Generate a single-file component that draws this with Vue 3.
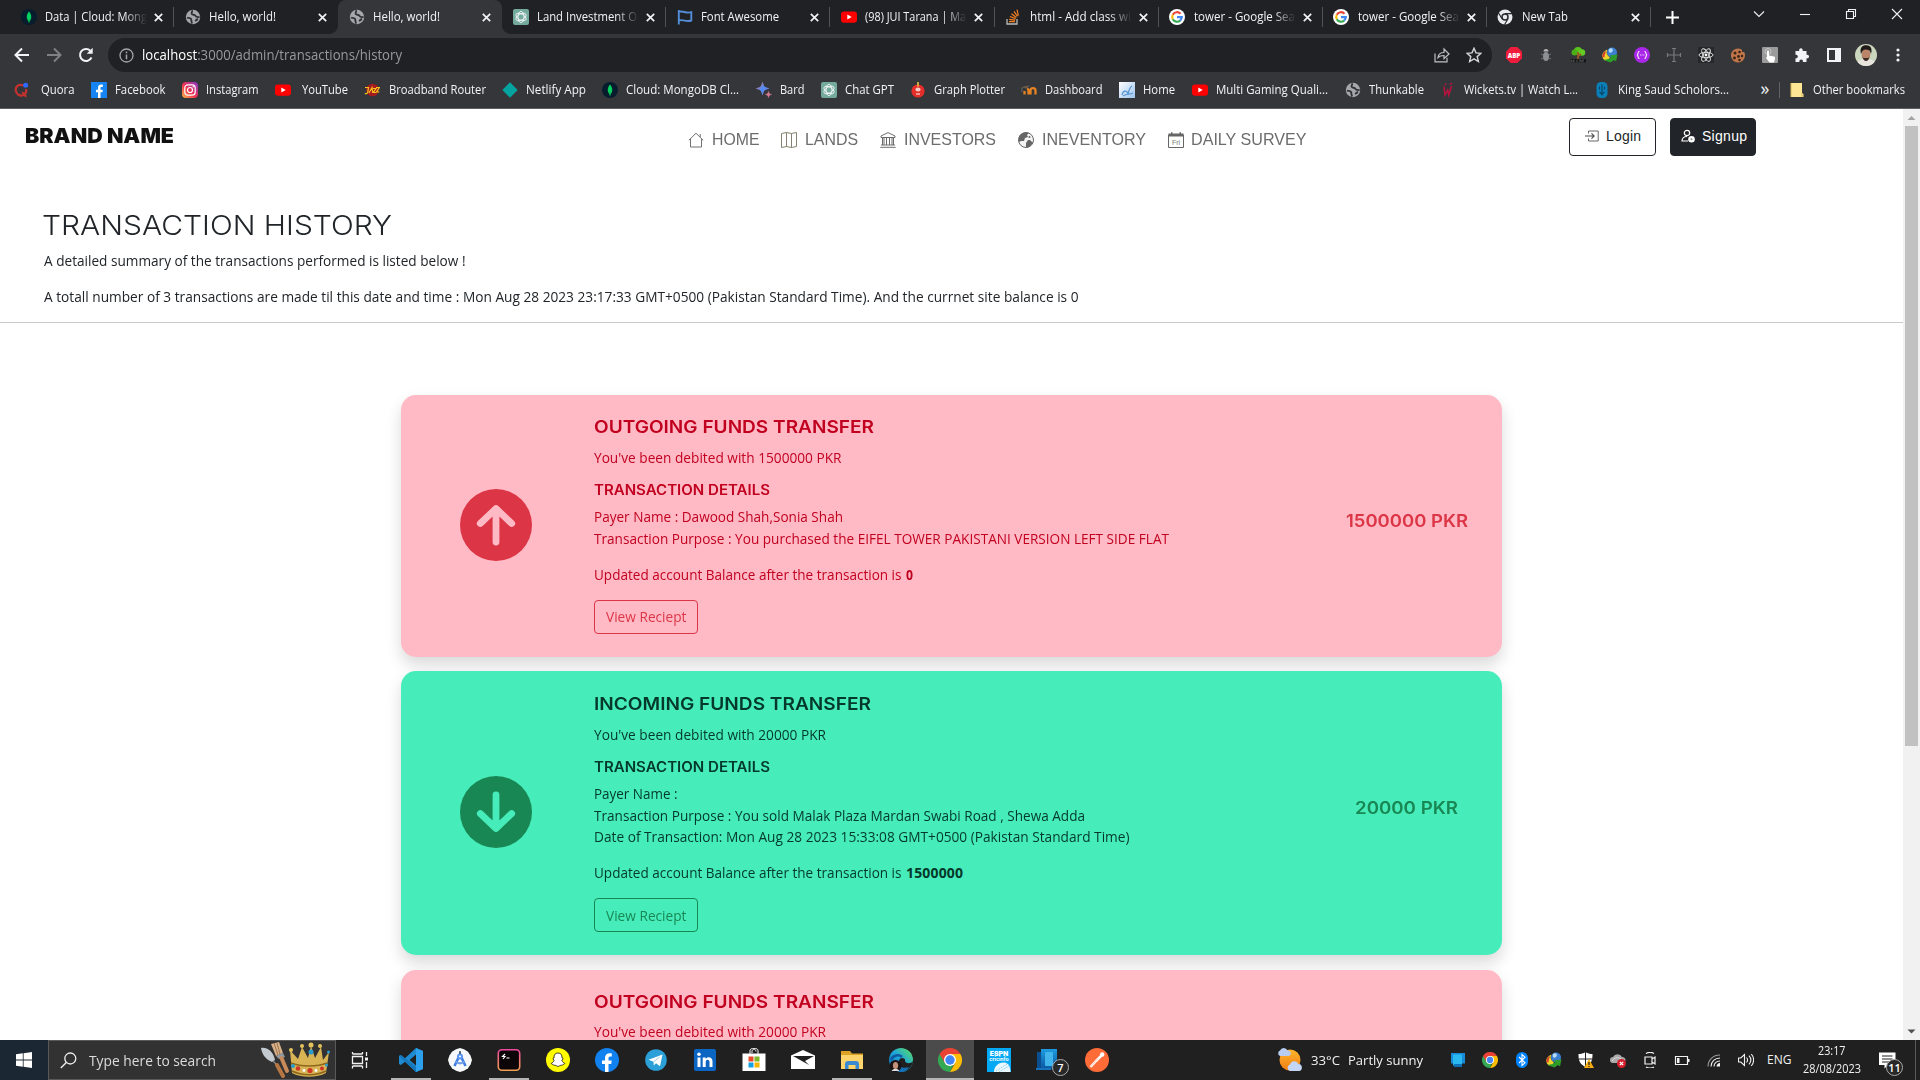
<script setup>
const tabs = [
  { icon: 'mongo', text: 'Data | Cloud: Mong', w: 102, fade: true },
  { icon: 'globe', text: 'Hello, world!', w: 67 },
  { icon: 'globe', text: 'Hello, world!', w: 67, active: true },
  { icon: 'gpt', text: 'Land Investment O', w: 100, fade: true },
  { icon: 'flag', text: 'Font Awesome', w: 78 },
  { icon: 'youtube', text: '(98) JUI Tarana | Ma', w: 101, fade: true },
  { icon: 'stack', text: 'html - Add class wi', w: 101, fade: true },
  { icon: 'google', text: 'tower - Google Sea', w: 101, fade: true },
  { icon: 'google', text: 'tower - Google Sea', w: 101, fade: true },
  { icon: 'chromebw', text: 'New Tab', w: 46 },
]

const bookmarks = [
  { icon: 'quora', text: 'Quora', x: 14, tx: 41, w: 33.5 },
  { icon: 'fbsquare', text: 'Facebook', x: 91, tx: 115, w: 50.5 },
  { icon: 'instagram', text: 'Instagram', x: 182, tx: 206, w: 52.5 },
  { icon: 'youtube', text: 'YouTube', x: 275, tx: 302, w: 46 },
  { icon: 'jazz', text: 'Broadband Router', x: 364, tx: 389, w: 97 },
  { icon: 'netlify', text: 'Netlify App', x: 502, tx: 526, w: 60 },
  { icon: 'mongo', text: 'Cloud: MongoDB Cl...', x: 602, tx: 626, w: 113 },
  { icon: 'bard', text: 'Bard', x: 756, tx: 780, w: 24.5 },
  { icon: 'gpt', text: 'Chat GPT', x: 821, tx: 845, w: 49 },
  { icon: 'plotter', text: 'Graph Plotter', x: 910, tx: 934, w: 71 },
  { icon: 'moodle', text: 'Dashboard', x: 1021, tx: 1045, w: 57.5 },
  { icon: 'homepic', text: 'Home', x: 1119, tx: 1143, w: 32 },
  { icon: 'youtube', text: 'Multi Gaming Quali...', x: 1192, tx: 1216, w: 112 },
  { icon: 'globe', text: 'Thunkable', x: 1345, tx: 1369, w: 55 },
  { icon: 'wickets', text: 'Wickets.tv | Watch L...', x: 1440, tx: 1464, w: 114 },
  { icon: 'ksu', text: 'King Saud Scholors...', x: 1594, tx: 1618, w: 111 },
].map((b, i, all) => ({ ...b, width: (all[i + 1]?.x ?? 1758.5) - b.x, gap: b.tx - b.x - 16 }))

const extensions = ['abp', 'bug', 'tree', 'idm', 'braces', 'cross', 'react', 'cookie', 'hand', 'puzzle', 'panel', 'avatar', 'dots']

const nav = [
  { icon: 'house', text: 'HOME', w: 47.5, width: 93 },
  { icon: 'map', text: 'LANDS', w: 53, width: 99 },
  { icon: 'bank', text: 'INVESTORS', w: 92, width: 138 },
  { icon: 'earth', text: 'INEVENTORY', w: 104, width: 149.5 },
  { icon: 'calendar', text: 'DAILY SURVEY', w: 115.5, width: 141 },
]

const transactions = [
  {
    kind: 'out', title: 'OUTGOING FUNDS TRANSFER', titleW: 280,
    note: "You've been debited with 1500000 PKR", noteW: 247.5,
    lines: [
      { text: 'Payer Name : Dawood Shah,Sonia Shah', w: 249 },
      { text: 'Transaction Purpose : You purchased the EIFEL TOWER PAKISTANI VERSION LEFT SIDE FLAT', w: 575 },
    ],
    balance: '0', balanceW: 7, amount: '1500000 PKR', amountW: 122,
  },
  {
    kind: 'in', title: 'INCOMING FUNDS TRANSFER', titleW: 277,
    note: "You've been debited with 20000 PKR", noteW: 232,
    lines: [
      { text: 'Payer Name :', w: 83.5 },
      { text: 'Transaction Purpose : You sold Malak Plaza Mardan Swabi Road , Shewa Adda', w: 491 },
      { text: 'Date of Transaction: Mon Aug 28 2023 15:33:08 GMT+0500 (Pakistan Standard Time)', w: 535.5 },
    ],
    balance: '1500000', balanceW: 57, amount: '20000 PKR', amountW: 103,
  },
  {
    kind: 'out', title: 'OUTGOING FUNDS TRANSFER', titleW: 280,
    note: "You've been debited with 20000 PKR", noteW: 232,
    lines: [], balance: '', balanceW: 0, amount: '20000 PKR', amountW: 103,
  },
]

const apps = [
  { icon: 'vscode', open: true }, { icon: 'studio' }, { icon: 'terminal', open: true }, { icon: 'snapchat' },
  { icon: 'facebook' }, { icon: 'telegram' }, { icon: 'linkedin' }, { icon: 'store' }, { icon: 'mail' },
  { icon: 'explorer', open: true }, { icon: 'edge' }, { icon: 'chrome', active: true }, { icon: 'espn' },
  { icon: 'phone', badge: '7' }, { icon: 'postman' },
]
const tray = ['pc', 'chrome', 'bluetooth', 'idm', 'shield', 'cloudx', 'meet', 'battery', 'wifi', 'volume']

// Sets a line of text to a given width: tracking when it is short, condensing when it is long.
// With .stretch the glyphs themselves are widened instead of tracked.
const vFit = {
  mounted(el, { value, modifiers }) {
    if (!value) return
    el.classList.add('fit')
    const natural = el.getBoundingClientRect().width
    const n = el.textContent.length
    if (value >= natural && n > 1 && !modifiers.stretch) {
      el.style.letterSpacing = `${(value - natural) / (n - 1)}px`
    } else {
      el.style.transform = `scaleX(${value / natural})`
      el.style.marginRight = `${value - natural}px`
    }
  },
}
</script>

<template>
  <div class="screen">
    <svg class="defs" aria-hidden="true">
      <defs>
        <linearGradient id="g-insta" x1="0" y1="1" x2="1" y2="0"><stop offset="0" stop-color="#fdc04a" /><stop offset=".45" stop-color="#f0304f" /><stop offset="1" stop-color="#8a3ad0" /></linearGradient>
        <linearGradient id="g-edge" x1="0" y1="1" x2="1" y2="0"><stop offset="0" stop-color="#0c59a4" /><stop offset=".5" stop-color="#1da5dc" /><stop offset="1" stop-color="#5ee05c" /></linearGradient>
        <linearGradient id="g-bard" x1="0" y1="0" x2="1" y2="1"><stop offset="0" stop-color="#e06a6a" /><stop offset=".5" stop-color="#4d8df5" /><stop offset="1" stop-color="#8c7bd8" /></linearGradient>
        <linearGradient id="g-sun" x1="0" y1="0" x2="0" y2="1"><stop offset="0" stop-color="#ffb629" /><stop offset="1" stop-color="#f27d16" /></linearGradient>
        <linearGradient id="g-term" x1="0" y1="0" x2="0" y2="1"><stop offset="0" stop-color="#f04aa0" /><stop offset="1" stop-color="#f0a050" /></linearGradient>
        <linearGradient id="g-phone" x1="0" y1="0" x2="0" y2="1"><stop offset="0" stop-color="#1e9be0" /><stop offset="1" stop-color="#0b5aa2" /></linearGradient>
        <linearGradient id="g-pic" x1="0" y1="0" x2="1" y2="1"><stop offset="0" stop-color="#ffffff" /><stop offset="1" stop-color="#9cc3ee" /></linearGradient>
      </defs>
      <symbol id="i-mongo" viewBox="0 0 16 16"><circle cx="8" cy="8" r="8" fill="#071c2c" /><path d="M8 2.500c3 3.500 3 7 0 10.500c-3-3.500-3-7 0-10.500z" fill="#06d05e" /><path d="M8 10v4" stroke="#0aa34f" stroke-width=".8" /></symbol>
      <symbol id="i-globe" viewBox="0 0 16 16"><circle cx="8" cy="8" r="7.200" fill="#a4a8ad" /><path d="M2 8.500c1 .5 3 .3 4 1.300c.8 1-.2 1.800.6 2.900c.5.800.2 1.500-.4 1.700M6.500 1.500c2 1-1 2 .3 3.500c1 1.200 3.200.2 3.800 2c.5 1.500 2.500 1 4 1.300M10 12c1-.5 1.500-1.500 3-2" fill="none" stroke="#303236" stroke-width="1.900" /></symbol>
      <symbol id="i-gpt" viewBox="0 0 16 16"><rect width="16" height="16" rx="2" fill="#74aa9c" /><g fill="none" stroke="#fff" stroke-width=".8"><ellipse cx="8" cy="8" rx="3" ry="5.600" /><ellipse cx="8" cy="8" rx="3" ry="5.600" transform="rotate(60 8 8)" /><ellipse cx="8" cy="8" rx="3" ry="5.600" transform="rotate(120 8 8)" /></g></symbol>
      <symbol id="i-flag" viewBox="0 0 16 16"><path d="M1.800 1v14.500M1.800 3c4-2 7 2 12.500.2v8.300c-5.500 2-8-1.800-12.500.2" fill="none" stroke="#538dd7" stroke-width="1.900" /></symbol>
      <symbol id="i-youtube" viewBox="0 0 16 16"><rect y="2.400" width="16" height="11.400" rx="3" fill="#f00" /><path d="M6.300 5.600v5l4.400-2.500z" fill="#fff" /></symbol>
      <symbol id="i-stack" viewBox="0 0 16 16"><path d="M2 10v5h10v-5" fill="none" stroke="#bcbbbb" stroke-width="1.300" /><path d="M4 12.700h6M4.200 10.300l6 .8M4.900 7.500l5.700 2.100M6.500 4.700l4.900 3.700M9 2.300l3.500 5M12 .7l1.400 6" stroke="#f48024" stroke-width="1.200" /></symbol>
      <symbol id="i-google" viewBox="0 0 16 16"><circle cx="8" cy="8" r="8" fill="#fff" /><g fill="none" stroke-width="2.200"><path d="M11.500 4.700A4.800 4.800 0 0 0 3.800 5.700" stroke="#ea4335" /><path d="M3.800 5.700a4.800 4.800 0 0 0 0 4.600" stroke="#fbbc05" /><path d="M3.800 10.300a4.800 4.800 0 0 0 7.300 1.300" stroke="#34a853" /><path d="M11.100 11.600a4.600 4.600 0 0 0 1.700-3.500H8" stroke="#4285f4" /></g></symbol>
      <symbol id="i-chromebw" viewBox="0 0 16 16"><circle cx="8" cy="8" r="7.500" fill="#e8eaed" /><circle cx="8" cy="8" r="3" fill="#e8eaed" stroke="#292a2d" stroke-width="1.500" /><path d="M8 4.600h7M5 9.700L1.500 4M11 9.700l-3.500 6" stroke="#292a2d" stroke-width="1.200" /></symbol>
      <symbol id="i-quora" viewBox="0 0 16 16"><path d="M9.500 3.500C5 1.500 1.500 4.500 1.700 8c.2 4 4 6.500 7.300 5.200C12 12 12.500 9 12 7M8 10.500c2 .5 2.500 4 4.500 3.700" fill="none" stroke="#c5322d" stroke-width="2.200" /><circle cx="11.600" cy="3.200" r="2.500" fill="#2f69ff" /></symbol>
      <symbol id="i-fbsquare" viewBox="0 0 16 16"><rect width="16" height="16" fill="#1685f2" /><path d="M7 16v-5.800H5V7.800h2V6c0-2.300 1.200-3.400 3.200-3.400h1.600v2.300h-1.200c-.9 0-1.100.4-1.100 1.200v1.700h2.300l-.3 2.400h-2V16z" fill="#fff" /></symbol>
      <symbol id="i-instagram" viewBox="0 0 16 16"><rect width="16" height="16" rx="4" fill="url(#g-insta)" /><rect x="2.800" y="2.800" width="10.400" height="10.400" rx="3" fill="none" stroke="#fff" stroke-width="1.200" /><circle cx="8" cy="8" r="2.500" fill="none" stroke="#fff" stroke-width="1.200" /><circle cx="11.200" cy="4.800" r=".7" fill="#fff" /></symbol>
      <symbol id="i-jazz" viewBox="0 0 16 16"><circle cx="8.500" cy="8" r="6.300" fill="#a51c20" /><path d="M1 5.500h3.500L3.800 10c-.3 1.500-1.500 2-3 1.500M5 11l3-5.500l.8 5.500M9 6.500h3l-2.700 4h2.500M12 5.500h3.500l-3 4.500h2.800" fill="none" stroke="#f6c51e" stroke-width="1.200" /></symbol>
      <symbol id="i-netlify" viewBox="0 0 16 16"><path d="M8 .3L15.700 8L8 15.700L.3 8z" fill="#05a3a0" /></symbol>
      <symbol id="i-bard" viewBox="0 0 16 16"><path d="M6.500.5c.8 4 2 5.200 6 6c-4 .8-5.200 2-6 6c-.8-4-2-5.200-6-6c4-.8 5.200-2 6-6z" fill="url(#g-bard)" stroke="url(#g-bard)" stroke-width="1" /><path d="M12.500 9.500c.4 2 1 2.600 3 3c-2 .4-2.600 1-3 3c-.4-2-1-2.600-3-3c2-.4 2.600-1 3-3z" fill="#d77a94" stroke="#d77a94" stroke-width=".6" /></symbol>
      <symbol id="i-plotter" viewBox="0 0 16 16"><circle cx="8" cy="9" r="6.600" fill="#e52d2a" /><path d="M8 0v4.500" stroke="#e8c63c" stroke-width="1.600" /><ellipse cx="8" cy="7.500" rx="2.600" ry="2" fill="#f4c9c4" /><path d="M6 11h4v2H6z" fill="#f0938d" /></symbol>
      <symbol id="i-moodle" viewBox="0 0 16 16"><path d="M3.500 12.500V9M7.500 12.500V9c0-1-.5-2-1.500-2M9.500 12.500V8.500c0-3.200 5-3.200 5 0v4" fill="none" stroke="#e58222" stroke-width="2.300" /><path d="M0 5.500l5-1.800h4L6 6.500z" fill="#6b5a4a" /><path d="M1 6v4" stroke="#666" /></symbol>
      <symbol id="i-homepic" viewBox="0 0 16 16"><rect width="16" height="16" fill="url(#g-pic)" /><path d="M3 13c1-5 5-5 6-1c1-4 2-7 4-8M4 14c4-3 6-1 10-3" fill="none" stroke="#5795d5" stroke-width="1.200" /></symbol>
      <symbol id="i-wickets" viewBox="0 0 16 16"><path d="M4 4.500l1 8.500l2.700-5l1 5l3-9M5 3l1-1.500M10 2.500l2-1.500" fill="none" stroke="#b8133f" stroke-width="1.500" /></symbol>
      <symbol id="i-ksu" viewBox="0 0 16 16"><rect x="2.500" width="11" height="16" rx="4.500" fill="#0b80b8" /><path d="M8 2.500v11M5.500 4.500v3M10.500 4.500v3M5.500 10l2.500 2.500l2.500-2.500" fill="none" stroke="#0a456c" stroke-width="1.200" /></symbol>
      <symbol id="i-abp" viewBox="0 0 16 16"><path d="M4.700 0h6.600L16 4.700v6.600L11.300 16H4.700L0 11.300V4.700z" fill="#ef1c3c" /></symbol>
      <symbol id="i-bug" viewBox="0 0 16 16"><ellipse cx="8" cy="9.500" rx="3" ry="4.500" fill="#8c8f93" /><path d="M5.500 4.500a2.500 2.500 0 0 1 5 0z" fill="#b5b5b5" /><path d="M5 8L3 7M5 11l-2 1M11 8l2-1M11 11l2 1" stroke="#707276" /></symbol>
      <symbol id="i-tree" viewBox="0 0 16 16"><circle cx="8" cy="4" r="4" fill="#58c51d" /><circle cx="4.500" cy="5.500" r="3" fill="#4caf18" /><circle cx="12" cy="5.500" r="3.200" fill="#62cc25" /><path d="M8 5v7M8 9l3-2" stroke="#9a5b23" stroke-width="1.800" /><path d="M0 12h16v3.500H0z" fill="#161616" /><path d="M1 12.500v3M4 12.500v3M1 14h3M7 12.500v3M10 15.500v-3l1.500 2l1.500-2v3" stroke="#777" stroke-width=".6" fill="none" /></symbol>
      <symbol id="i-idm" viewBox="0 0 16 16"><circle cx="10" cy="5.500" r="5" fill="#3d7fd0" /><path d="M7 2c3-2 5 1 3 3S6 5 7 2z" fill="#b5dcf5" /><path d="M.5 10c-1-3 2-6.500 5-7.500C4 5.500 4.500 8 8 10.500L6 13.500C4 14 1 13 .5 10z" fill="#f0d42e" /><path d="M3 4.500A6 6 0 0 0 .5 10l2 .5c0-3 .5-4 2-6z" fill="#d83a2e" /><path d="M15.500 7.500l-1.500 7l-2-1.500l-3.500 2.500L1.500 13l5-1l3-2l-2-1.500z" fill="#2d9c2a" /></symbol>
      <symbol id="i-braces" viewBox="0 0 16 16"><circle cx="8" cy="8" r="8" fill="#a827e8" /><path d="M5.500 4.500C3 4.500 5 7.500 3 8c2 .5 0 3.500 2.500 3.500M10.500 4.500C13 4.500 11 7.500 13 8c-2 .5 0 3.500-2.500 3.500M6 8h.8M7.700 8h.8M9.400 8h.8" fill="none" stroke="#fff" stroke-width="1.100" /></symbol>
      <symbol id="i-cross" viewBox="0 0 16 16"><path d="M8 1v14M1 8h14M6 1.500h4M6 14.500h4M1.500 6v4M14.500 6v4" stroke="#78797b" stroke-width="1.200" /></symbol>
      <symbol id="i-react" viewBox="0 0 16 16"><rect width="16" height="16" fill="#26272a" /><g fill="none" stroke="#e8e8e8" stroke-width=".9"><ellipse cx="8" cy="8" rx="7" ry="2.700" /><ellipse cx="8" cy="8" rx="7" ry="2.700" transform="rotate(60 8 8)" /><ellipse cx="8" cy="8" rx="7" ry="2.700" transform="rotate(120 8 8)" /></g><circle cx="8" cy="8" r="1.400" fill="#fff" /></symbol>
      <symbol id="i-cookie" viewBox="0 0 16 16"><circle cx="8" cy="8.500" r="7" fill="#c0764a" /><path d="M12 0h4v5h-4z" fill="#35363a" /><g fill="#3c2317"><circle cx="5" cy="6" r="1.500" /><circle cx="9.500" cy="5" r="1.300" /><circle cx="4.500" cy="11" r="1.400" /><circle cx="8.500" cy="9.500" r="1.400" /><circle cx="12" cy="9" r="1.200" /><circle cx="9.500" cy="13" r="1.300" /></g></symbol>
      <symbol id="i-hand" viewBox="0 0 16 16"><rect width="16" height="16" rx="1" fill="#9b9b9b" /><circle cx="6" cy="4.500" r="3" fill="none" stroke="#c8c8c8" /><path d="M5 4.500c0-1.500 2-1.500 2 0v4l5 1c1.500.5 1 2 .8 3l-.8 3H7.500L4 11c0-1 1-1 1-.5z" fill="#fff" /></symbol>
      <symbol id="i-puzzle" viewBox="0 0 16 16"><path d="M1.500 4h3.700c-.8-3.800 4.200-3.800 3.500 0h3.800v3.800c3.400-.7 3.400 4.200 0 3.500V15H8.900c.6-3.300-4-3.300-3.500 0H1.500v-3.800c3.100.5 3.100-4.100 0-3.500z" fill="#f1f3f4" /></symbol>
      <symbol id="i-panel" viewBox="0 0 16 16"><path d="M2 2h12v12H2z" fill="none" stroke="#f1f3f4" stroke-width="2" /><path d="M9 2h5v12H9z" fill="#f1f3f4" /></symbol>
      <symbol id="i-avatar" viewBox="0 0 22 22"><circle cx="11" cy="11" r="11" fill="#cbd6be" /><path d="M2.500 18c2-3 5-3 8.500-3s6.500 0 8.500 3a11 11 0 0 1-17 0z" fill="#e6e4dc" /><ellipse cx="11" cy="10.500" rx="4.300" ry="6" fill="#b98468" /><path d="M6 10C4 2 9 .5 13 1.500c4 1 4 5 3 8.500c-1-3-1-4-5-4.500c-3 0-4 2-5 4.500z" fill="#211a18" /><path d="M7.500 12.500c1 6 6 6 7 0l-1 1.500h-5z" fill="#3c2a25" /></symbol>
      <symbol id="i-dots" viewBox="0 0 16 16"><g fill="#f1f3f4"><circle cx="8" cy="3" r="1.600" /><circle cx="8" cy="8" r="1.600" /><circle cx="8" cy="13" r="1.600" /></g></symbol>
      <symbol id="i-house" viewBox="0 0 16 16"><path d="M.8 8.300L8 1.200l7.200 7.100M2.500 7v8h11V7M12.200 5V2" fill="none" stroke="#707070" stroke-width="1" /></symbol>
      <symbol id="i-map" viewBox="0 0 16 16"><path d="M.5 1.500L5.500.5l5 1l5-1v14l-5 1l-5-1l-5 1zM5.500.5v14M10.500 1.500v14" fill="none" stroke="#85806f" stroke-width="1" /></symbol>
      <symbol id="i-bank" viewBox="0 0 16 16"><path d="M8 .6l7 3.400v1.500H1V4zM1 13h14M.3 15.300h15.400M2.500 6v7M4 6v7M6.500 6v7M9.500 6v7M12 6v7M13.500 6v7" fill="none" stroke="#6d6d6d" stroke-width="1" /></symbol>
      <symbol id="i-earth" viewBox="0 0 16 16"><circle cx="8" cy="8" r="7.500" fill="#f4f4f4" stroke="#666" /><path d="M1 5C2 1 8-.5 11 1L9 3l1 2l-3 1l-1 3l-3 0l-2 1zM8 11l2-3l2 0l2 2l1 0c-1 3-4 5.500-7 5.500z" fill="#666" /><circle cx="11.500" cy="5" r="1" fill="#666" /></symbol>
      <symbol id="i-calendar" viewBox="0 0 16 16"><path d="M.5 3h15v12.500H.5z" fill="none" stroke="#666" /><path d="M.5 1.500h15v3H.5zM3 .3h1.500v2H3zM11.500.3H13v2h-1.500z" fill="#666" /></symbol>
      <symbol id="i-vscode" viewBox="0 0 24 24"><path d="M17 0l7 3v18l-7 3L6 13.700L1.800 17L0 16V8l1.800-1L6 10.300zM17 6.500L10.500 12l6.500 5.500z" fill="#1f8ad2" /><path d="M17 0l7 3v18l-7 3z" fill="#2ca0ec" /><path d="M0 8l1.800-1L17 19V24z" fill="#1677bb" /></symbol>
      <symbol id="i-studio" viewBox="0 0 24 24"><path d="M12 0l4 1.200l4 2.600l2.600 4L24 12l-1.300 4.200l-2.700 4l-4 2.600L12 24l-4-1.200l-4-2.600l-2.700-4L0 12l1.300-4.200l2.700-4l4-2.600z" fill="#f7f8f9" /><path d="M6.500 18L12 6.500L17.500 18" fill="none" stroke="#3f7fe5" stroke-width="2.600" /><path d="M7.500 13.500c3 2.500 6 2.500 9 0" fill="none" stroke="#6f9fea" stroke-width="2" /><circle cx="12" cy="8.500" r="3" fill="#5a96ee" /><circle cx="12" cy="8.500" r="1" fill="#fff" /><path d="M12 3v3" stroke="#3a4a5a" stroke-width="1.500" /></symbol>
      <symbol id="i-terminal" viewBox="0 0 24 24"><rect x="1.300" y="1.700" width="21.400" height="20.600" rx="3.500" fill="#0b0507" stroke="url(#g-term)" stroke-width="1.600" /><path d="M8 6L5.500 8.500H8L6 11M9.500 10h3" fill="none" stroke="#fff" stroke-width="1.100" /></symbol>
      <symbol id="i-snapchat" viewBox="0 0 24 24"><circle cx="12" cy="12" r="12" fill="#fffc00" /><path d="M12 5c3 0 4.200 2 4 5c1 .3 1.500.5 1 1.200l-1.200 1c.7 2 2 2.700 3 3.300c-.5 1-1.600.8-2.300 1.500c-1 .5-2 0-3 .8c-1 .8-2 .8-3 0c-1-.8-2-.3-3-.8c-.7-.7-1.800-.5-2.300-1.500c1-.6 2.300-1.300 3-3.300L7 11.200c-.5-.7 0-.9 1-1.200c-.2-3 1-5 4-5z" fill="#fff" stroke="#111" stroke-width=".8" /></symbol>
      <symbol id="i-facebook" viewBox="0 0 24 24"><circle cx="12" cy="12" r="12" fill="#1281f0" /><path d="M10 24v-8H7v-3.500h3V10c0-3 1.800-4.700 4.500-4.700c1 0 2.300.2 2.300.2v3H15.300c-1.500 0-1.800.8-1.800 1.800v2.200h3.200L16.200 16h-2.700v8z" fill="#fff" /></symbol>
      <symbol id="i-telegram" viewBox="0 0 24 24"><circle cx="12" cy="12" r="10.800" fill="#2a9fd8" /><path d="M4.500 11.800L18.500 6.500L16 18.300l-4-3l-2.200 2.200l-.3-3.700z" fill="#fff" /><path d="M9.500 14l6-5" stroke="#9ccae4" /></symbol>
      <symbol id="i-linkedin" viewBox="0 0 24 24"><rect x="1" y="1" width="22" height="22" rx="2" fill="#0a66c2" /><path d="M4.500 9.500h3V19h-3zM9.700 9.500h3v1.300c1.800-2.700 6.800-2 6.800 2.500V19h-3v-5c0-3-3.800-2.800-3.800 0v5h-3z" fill="#fff" /><circle cx="6" cy="6.300" r="1.800" fill="#fff" /></symbol>
      <symbol id="i-store" viewBox="0 0 24 24"><path d="M.5 5.500h23V23h-23z" fill="#fff" /><path d="M8 6V2.500c0-3 8-3 8 0V6M10 5V3.500c0-3 4-3 4 0" fill="none" stroke="#fff" stroke-width="1" /><path d="M6.500 8.500h5v5h-5z" fill="#e74b2a" /><path d="M12.500 8.500h5v5h-5z" fill="#7db928" /><path d="M6.500 14.500h5v5h-5z" fill="#12a0e8" /><path d="M12.500 14.500h5v5h-5z" fill="#f7b500" /></symbol>
      <symbol id="i-mail" viewBox="0 0 24 24"><path d="M0 7.500L12 2l12 5.500V21H0z" fill="#fff" /><path d="M2 8h21l-9 5l4 4z" fill="#202020" /></symbol>
      <symbol id="i-explorer" viewBox="0 0 24 24"><path d="M1 3h9l2 2.500h11V21H1z" fill="#dba426" /><path d="M1 7h22v14H1z" fill="#ffd56b" /><path d="M5 21v-5c0-2 1-3 3-3h8c2 0 3 1 3 3v5h-3.500v-4h-7v4z" fill="#3b8ad4" /></symbol>
      <symbol id="i-edge" viewBox="0 0 24 24"><circle cx="12" cy="12" r="12" fill="url(#g-edge)" /><path d="M10 14c-1-5 7-5 6-1c1 3 6 3 8 0c-1 8-9 12-14 9z" fill="#202020" /><path d="M2 12c2-5 8-6 11-3" fill="none" stroke="#0d59a0" stroke-width="2.500" /><path d="M9 13c0 6 5 8 11 6c-3 5-9 6-12 4z" fill="#1470b8" /><circle cx="6.500" cy="18" r="6" fill="#1a1213" /><ellipse cx="6.500" cy="17.500" rx="2.600" ry="3.600" fill="#c39079" /><path d="M2.500 23c2-3 6-3 8 0z" fill="#ddd" /></symbol>
      <symbol id="i-chrome" viewBox="0 0 24 24"><path d="M12 12h5.200L12 24A12 12 0 0 1 1.600 6z" fill="#34a853" /><path d="M12 6h10.400A12 12 0 0 1 12 24l5.200-9z" fill="#fbbc05" /><path d="M1.600 6A12 12 0 0 1 22.400 6H12l-5.200 9z" fill="#ea4335" /><circle cx="12" cy="12" r="6" fill="#fff" /><circle cx="12" cy="12" r="4.700" fill="#4285f4" /></symbol>
      <symbol id="i-espn" viewBox="0 0 24 24"><path d="M0 0h24v24H0z" fill="#03a9f4" /><path d="M7 24c0-6 5-10 10-9.500s6 4 6.500 9.500z" fill="#eaf7ff" /><path d="M9 23l11-7M12 24l10-6" stroke="#7ac8ee" stroke-dasharray="1 1" /></symbol>
      <symbol id="i-phone" viewBox="0 0 24 24"><path d="M1 4h16v17H1z" fill="#0b4f91" /><rect x="5" y="1" width="16" height="19" fill="url(#g-phone)" /><rect x="9" y="4" width="8" height="14" rx="1" fill="#42b4ec" /><path d="M0 20h15v2H0z" fill="#1673bb" /></symbol>
      <symbol id="i-postman" viewBox="0 0 24 24"><circle cx="12" cy="12" r="12" fill="#ff6c37" /><path d="M5.500 19l6-6.500M11 13l6-6" stroke="#fff" stroke-width="2.500" /><path d="M5.500 19l8-9" stroke="#ffcdbb" stroke-width="1" /><circle cx="17.200" cy="6.500" r="2.200" fill="#fff" /></symbol>
      <symbol id="i-pc" viewBox="0 0 16 16"><path d="M1 1h14v10.500H1z" fill="#178bd8" /><path d="M3 2.500h9v11H3z" fill="#2bb7f0" /><path d="M4 12h8v3H4z" fill="#0d70b8" /></symbol>
      <symbol id="i-bluetooth" viewBox="0 0 16 16"><rect x="2" y="0" width="12" height="16" rx="6" fill="#0082fc" /><path d="M5 5l6 5.800L8 13.500v-11L11 5.200L5 11" fill="none" stroke="#fff" stroke-width="1.100" /></symbol>
      <symbol id="i-shield" viewBox="0 0 16 16"><path d="M7.500 0c2 1.500 4.500 2 7 2c0 6-1 10-7 13C1.500 12 .5 8 .5 2c2.500 0 5-.5 7-2z" fill="#fff" /><path d="M7.500 0v15M1 7h13" stroke="#202020" /><path d="M11 7l5 9H6z" fill="#f6ad12" /><path d="M11 10v3M11 14v1" stroke="#222" stroke-width="1.200" /></symbol>
      <symbol id="i-cloudx" viewBox="0 0 16 16"><path d="M3 11a3 3 0 0 1 0-6a5 5 0 0 1 9 0c5 0 4 6 1 6z" fill="#aaa" /><path d="M2 9c3-4 6-4 9-2" stroke="#ddd" fill="none" /><circle cx="11.500" cy="11.500" r="4.500" fill="#d51d2b" /><path d="M9.800 9.800l3.400 3.400M13.200 9.800l-3.400 3.400" stroke="#fff" stroke-width="1.200" /></symbol>
      <symbol id="i-meet" viewBox="0 0 16 16"><path d="M3 5h7v7H3zM10 7l3-2v7l-3-2M4 1.500c2-1.500 6-1.500 8 0M4 15c2 1.300 6 1.300 8 0" fill="none" stroke="#f1f1f1" stroke-width="1.200" /></symbol>
      <symbol id="i-battery" viewBox="0 0 16 16"><path d="M1.500 4.500h12v8h-12z" fill="none" stroke="#f1f1f1" stroke-width="1.200" /><path d="M3 6h2.500v5H3zM14 7h1.500v3H14z" fill="#f1f1f1" /></symbol>
      <symbol id="i-wifi" viewBox="0 0 16 16"><g fill="none" stroke="#f1f1f1" stroke-width="1.100"><path d="M2 14.500C2 8 7 3 14 3" stroke="#999" /><path d="M5 14.500c0-5 4-8.500 9-8.500M8 14.500c0-3.500 3-5.500 6-5.500" /></g><path d="M10.500 14.500a4 4 0 0 1 3.500-3.500v3.500z" fill="#f1f1f1" /></symbol>
      <symbol id="i-volume" viewBox="0 0 16 16"><path d="M.5 6h2.300L6.500 2.500v11L2.800 10H.5zM8.500 5.500c1.300 1.500 1.300 3.500 0 5M11 3.700c2.200 2.500 2.200 6 0 8.600M13.300 2c3.100 3.500 3.100 8.500 0 12" fill="none" stroke="#f1f1f1" stroke-width="1.100" /></symbol>
    </svg>

    <header class="chrome">
      <div class="strip">
        <div v-for="(t, i) in tabs" :key="i" class="tab" :class="{ active: t.active }">
          <svg class="i16"><use :href="'#i-' + t.icon" /></svg>
          <span class="tablabel" :class="{ fade: t.fade }"><span v-fit="t.w">{{ t.text }}</span></span>
          <svg class="close" viewBox="0 0 9 9"><path d="M.8.8l7.400 7.400M8.200.8L.8 8.200" stroke="#f1f3f4" stroke-width="1.700" /></svg>
        </div>
        <svg class="plus" viewBox="0 0 13 13"><path d="M6.500 0v13M0 6.500h13" stroke="#fff" stroke-width="2" /></svg>
        <div class="winctl">
          <svg viewBox="0 0 12 12"><path d="M1 3.500l5 5l5-5" /></svg>
          <svg viewBox="0 0 12 12"><path d="M1 6.500h10" /></svg>
          <svg viewBox="0 0 12 12"><path d="M1.500 3.500h7v7h-7zM3.500 3.500v-2h7v7h-2" /></svg>
          <svg viewBox="0 0 12 12"><path d="M1 1l10 10M11 1L1 11" /></svg>
        </div>
      </div>
      <div class="toolbar">
        <div class="navs">
          <svg viewBox="0 0 16 16"><path d="M15 8H2M8 1.500L1.500 8L8 14.500" stroke="#f1f3f4" /></svg>
          <svg viewBox="0 0 16 16"><path d="M1 8h13M8 1.500L14.500 8L8 14.500" stroke="#808185" /></svg>
          <svg viewBox="0 0 16 16"><path d="M13.500 10.500A6 6 0 1 1 12.300 3.700" stroke="#f1f3f4" /><path d="M14.700.8v6H8.700z" fill="#f1f3f4" stroke="none" /></svg>
        </div>
        <div class="omnibox">
          <svg class="i15" viewBox="0 0 15 15"><circle cx="7.500" cy="7.500" r="6.500" fill="none" stroke="#a2a6aa" stroke-width="1.300" /><path d="M7.500 6.500v4.800M7.500 3.500v1.700" stroke="#a2a6aa" stroke-width="1.500" /></svg>
          <div v-fit="260" class="url"><b>localhost</b>:3000/admin/transactions/history</div>
          <svg class="i16 share" viewBox="0 0 16 16"><path d="M1 6.500v8.300h12v-4M4 10.500c.5-4 3-5 6-5V2l5 5l-5 4.700V8.500c-3 0-4.500.3-6 2z" fill="none" stroke="#bdc1c6" stroke-width="1.200" /></svg>
          <svg class="i16 star" viewBox="0 0 16 16"><path d="M8 1.300l2 4.600l5 .4l-3.800 3.300l1.200 4.900L8 11.900l-4.400 2.600l1.200-4.900L1 6.300l5-.4z" fill="none" stroke="#d2d5d9" stroke-width="1.400" /></svg>
        </div>
        <div class="exts">
          <span v-for="e in extensions" :key="e">
            <svg v-if="e === 'avatar'" class="i22"><use href="#i-avatar" /></svg>
            <svg v-else class="i16" viewBox="0 0 16 16"><use :href="'#i-' + e" width="16" height="16" /><text v-if="e === 'abp'" x="8" y="10.500" class="abp">ABP</text></svg>
          </span>
        </div>
      </div>
      <div class="bookmarks">
        <div v-for="b in bookmarks" :key="b.text" class="bm" :style="{ width: b.width + 'px', gap: b.gap + 'px' }">
          <svg class="i16"><use :href="'#i-' + b.icon" /></svg>
          <span v-fit="b.w">{{ b.text }}</span>
        </div>
        <span class="more">»</span>
        <div class="other">
          <svg class="i16" viewBox="0 0 16 16"><path d="M2 1h11v10l1.500 1v3H2z" fill="#ffe694" /><path d="M13 11v4M2 1v14" stroke="#d9b95a" /></svg>
          <span v-fit="92">Other bookmarks</span>
        </div>
      </div>
    </header>

    <div class="viewport">
      <main>
        <div class="topnav">
          <div class="brand"><span v-fit.stretch="149">BRAND NAME</span></div>
          <nav>
            <a v-for="n in nav" :key="n.text" :style="{ width: n.width + 'px' }">
              <svg class="i16" viewBox="0 0 16 16"><use :href="'#i-' + n.icon" width="16" height="16" /><text v-if="n.icon === 'calendar'" x="8" y="12.500" class="fri">Fri</text></svg><span v-fit="n.w">{{ n.text }}</span>
            </a>
          </nav>
          <div class="auth">
            <button class="login"><svg viewBox="0 0 14 12"><path d="M3.500 3.500V1h9.700v10H3.500V8.500" fill="none" stroke="#666" /><path d="M0 6h9M6.500 3.300L9.200 6L6.500 8.700" fill="none" stroke="#4b4b52" stroke-width="1.100" /></svg><span v-fit="35">Login</span></button>
            <button class="signup"><svg viewBox="0 0 14 14"><circle cx="6" cy="4" r="2.700" fill="none" stroke="#fff" stroke-width="1.200" /><path d="M7 12H1c0-3 2-4.500 5-4.500" fill="none" stroke="#fff" stroke-width="1.200" /><circle cx="10.500" cy="10.300" r="3.300" fill="#fff" /><circle cx="10.500" cy="10.300" r="1" fill="#888" /></svg><span v-fit="45">Signup</span></button>
          </div>
        </div>
        <section class="intro">
          <h1><span v-fit.stretch="350">TRANSACTION HISTORY</span></h1>
          <p v-fit="421.5">A detailed summary of the transactions performed is listed below !</p>
          <p v-fit="1034.5">A totall number of 3 transactions are made til this date and time : Mon Aug 28 2023 23:17:33 GMT+0500 (Pakistan Standard Time). And the currnet site balance is 0</p>
        </section>
        <section class="list">
          <article v-for="(t, i) in transactions" :key="i" class="card" :class="t.kind">
            <div class="mark">
              <svg viewBox="0 0 72 72"><circle cx="36" cy="36" r="36" /><path v-if="t.kind === 'out'" d="M36 53V20M20.300 34.500L36 19.500L51.700 34.500" /><path v-else d="M36 19v33M20.300 37.500L36 52.500L51.700 37.500" /></svg>
            </div>
            <div class="body">
              <h2 v-fit.stretch="t.titleW">{{ t.title }}</h2>
              <p v-fit="t.noteW" class="note">{{ t.note }}</p>
              <h3 v-fit.stretch="176">TRANSACTION DETAILS</h3>
              <p v-for="l in t.lines" :key="l.text" v-fit="l.w">{{ l.text }}</p>
              <template v-if="t.lines.length">
                <p class="updated"><span v-fit="307.5">Updated account Balance after the transaction is</span><b v-fit="t.balanceW">{{ t.balance }}</b></p>
                <button class="view"><span v-fit="80.5">View Reciept</span></button>
              </template>
            </div>
            <div class="amount"><span v-fit.stretch="t.amountW">{{ t.amount }}</span></div>
          </article>
        </section>
      </main>
      <aside class="scroll">
        <svg viewBox="0 0 17 17"><path d="M4.500 11L8.500 7l4 4z" fill="#a3a3a3" /></svg>
        <div class="thumb"></div>
        <svg viewBox="0 0 17 17"><path d="M4.500 6.500h8l-4 4z" fill="#505050" /></svg>
      </aside>
    </div>

    <footer class="taskbar">
      <div class="start"><svg viewBox="0 0 16 16"><path d="M0 2.300L6.800 1.300v6.300H0zM7.600 1.200L16 0v7.600H7.600zM0 8.400h6.800v6.300L0 13.700zM7.600 8.400H16V16l-8.400-1.200z" fill="#fff" /></svg></div>
      <div class="search">
        <svg class="lens" viewBox="0 0 17 17"><circle cx="10.300" cy="6.500" r="5.500" fill="none" stroke="#eee" stroke-width="1.300" /><path d="M6.300 10.500L.8 16" stroke="#eee" stroke-width="1.400" /></svg>
        <span v-fit="127">Type here to search</span>
        <svg class="art" viewBox="0 0 70 36">
          <path d="M1 6c6-1 12 3 14 12l-3 2C5 17 2 12 1 6z" fill="#c3cad0" /><path d="M13 19l4 4" stroke="#888" stroke-width="1.500" /><path d="M17 23l6 11" stroke="#b67743" stroke-width="4" stroke-linecap="round" />
          <path d="M11 2l8-2l4 11l-7 3z" fill="#d9b189" /><path d="M14 1l4 12M17 1l3 11" stroke="#8c6340" stroke-width=".8" /><path d="M16 14l7-3l2 4l-6 2z" fill="#929aa2" /><path d="M21.500 16l5.500 13" stroke="#c78a58" stroke-width="4" stroke-linecap="round" />
          <path d="M32 31L30 8l8 9l4-12l6 11l3-12l4 12l6-11l2 13l6-8l-3 21c-9 5-25 5-34 0z" fill="#d9b455" /><path d="M32 29c10 5 24 5 34 0M31 21c10 4 26 4 36 0" fill="none" stroke="#8d671c" stroke-width="1.500" />
          <g fill="#e5c35c"><circle cx="31" cy="8" r="2" /><circle cx="42" cy="4" r="2" /><circle cx="51" cy="3" r="2.500" /><circle cx="60" cy="4" r="2" /></g><circle cx="68.500" cy="10" r="1.500" fill="#2b9ccc" />
          <g fill="#cf3525"><circle cx="38" cy="26.500" r="2.300" /><circle cx="50" cy="28.500" r="2.600" /><circle cx="62" cy="26.500" r="2" /></g><g fill="#2b9ccc"><circle cx="51" cy="10" r="2.500" /><circle cx="33" cy="24" r="2" /><circle cx="66.500" cy="23" r="1.600" /></g><g fill="#fff"><circle cx="44" cy="28.500" r="1.400" /><circle cx="56" cy="28.500" r="1.400" /></g>
        </svg>
      </div>
      <div class="taskview"><svg viewBox="0 0 18 18"><path d="M1.500 5.500h10v7h-10zM1.500 3V1M11.500 3V1M1.500 3h10M1.500 15v2.500M11.500 15v2.500M1.500 15h10M15.500 1v4M15.500 11v6" fill="none" stroke="#f1f1f1" stroke-width="1.300" /><path d="M14 6.500h3v3h-3z" fill="#f1f1f1" /></svg></div>
      <div class="apps">
        <div v-for="a in apps" :key="a.icon" class="app" :class="{ open: a.open, current: a.active }">
          <svg viewBox="0 0 24 24"><use :href="'#i-' + a.icon" width="24" height="24" /><template v-if="a.icon === 'espn'"><text x="12" y="7.500" class="espn">ESPN</text><text x="12" y="12.800" class="info">cricinfo</text></template></svg>
          <i v-if="a.badge" class="badge">{{ a.badge }}</i>
        </div>
      </div>
      <div class="weather">
        <svg viewBox="0 0 26 26"><circle cx="13" cy="13" r="10.500" fill="url(#g-sun)" /><path d="M3 9a3 3 0 0 1 0-5.500a4 4 0 0 1 7.500 0c4-.5 4.500 5 1 5.500z" fill="#b7ccf0" /><path d="M13 24a3.400 3.400 0 0 1 0-6.500a4.500 4.500 0 0 1 8.500-.5c4.500 0 4.500 7 .5 7z" fill="#c4d6f5" /></svg>
        <span v-fit="29">33°C</span><span v-fit="75">Partly sunny</span>
      </div>
      <div class="tray"><span v-for="t in tray" :key="t"><svg class="i16"><use :href="'#i-' + t" /></svg></span></div>
      <div class="eng"><span v-fit="22.5">ENG</span></div>
      <div class="clock"><span v-fit="27.5">23:17</span><span v-fit="58">28/08/2023</span></div>
      <div class="notif">
        <svg viewBox="0 0 17 17"><path d="M0 .5h16.500V13H9l-3.500 3.500V13H0z" fill="#fff" /><path d="M3 4h10.500M3 7h10.500M3 10h7" stroke="#202020" stroke-width="1.200" /></svg>
        <i class="badge">11</i>
      </div>
      <div class="peek"></div>
    </footer>
  </div>
</template>

<style>
body { margin: 0; overflow: hidden; background: #fff; }
.fit { width: max-content; white-space: nowrap; transform-origin: 0 50%; flex: none; }
</style>

<style scoped>
* { box-sizing: border-box; }
.screen { width: 1920px; height: 1080px; display: flex; flex-direction: column; overflow: hidden; font-family: "Open Sans", "Noto Sans", sans-serif; font-size: 14px; color: #212529; }
.defs { position: absolute; width: 0; height: 0; }
svg { display: block; flex: none; }
span, b { white-space: nowrap; }
h1, h2, h3, p { margin: 0; }
button { padding: 0; font: inherit; }
text { text-anchor: middle; }
.abp { font: 800 6.200px "Open Sans", sans-serif; fill: #fff; }
.fri { font: 7px "Liberation Sans", sans-serif; fill: #777; }
.espn { font: 900 6.800px Inter, sans-serif; fill: #fff; }
.info { font: 700 5.200px Inter, sans-serif; fill: #fff; }
.i16 { width: 16px; height: 16px; }
.i15 { width: 15px; height: 15px; }
.i22 { width: 22px; height: 22px; }

.chrome { height: 109px; flex: none; background: #35363a; color: #f1f3f4; font-size: 12px; border-bottom: 1px solid #5f5f62; }
.strip { height: 34px; display: flex; align-items: center; padding-left: 10px; background: #202124; }
.tab { width: 164.1px; height: 34px; flex: none; display: flex; align-items: center; padding-left: 10.500px; position: relative; }
.tab::after { content: ""; position: absolute; right: 0; top: 7px; width: 1px; height: 20px; background: #505257; }
.tab:nth-child(2)::after { display: none; }
.active { background: #35363a; border-radius: 8px 8px 0 0; }
.active::before, .active::after { content: ""; position: absolute; top: auto; bottom: 0; width: 8px; height: 8px; background: radial-gradient(circle at 0 0, transparent 7.500px, #35363a 8px); }
.active::before { left: -8px; }
.active::after { right: -8px; background: radial-gradient(circle at 100% 0, transparent 7.500px, #35363a 8px); }
.tablabel { width: 104px; margin-left: 8.500px; overflow: hidden; line-height: 20px; margin-top: -1px; }
.fade { -webkit-mask-image: linear-gradient(90deg, #000 76%, transparent 98%); mask-image: linear-gradient(90deg, #000 76%, transparent 98%); }
.tablabel > span { display: inline-block; }
.close { width: 9px; height: 9px; margin-left: 5px; }
.plus { width: 13px; height: 13px; margin-left: 15px; }
.winctl { margin-left: auto; display: flex; gap: 34px; padding: 0 17px 6px 0; }
.winctl svg { width: 12px; height: 12px; fill: none; stroke: #f1f1f1; stroke-width: 1.1; }
.toolbar { height: 42px; display: flex; align-items: center; }
.navs { width: 108px; display: flex; gap: 16px; padding-left: 14px; }
.navs svg { width: 16px; height: 16px; fill: none; stroke-width: 2; }
.omnibox { width: 1384px; height: 34px; border-radius: 17px; background: #202124; display: flex; align-items: center; padding-left: 10.500px; }
.url { margin: -1px 0 0 8.500px; font-size: 14px; color: #969a9e; }
.url b { font-weight: 400; color: #fff; }
.share { margin-left: auto; }
.star { margin: 0 10px 0 16px; }
.exts { display: flex; margin-left: 6px; }
.exts span { width: 32px; display: flex; align-items: center; justify-content: center; }
.bookmarks { height: 28px; display: flex; align-items: center; padding: 0 0 0 14px; }
.bm { display: flex; align-items: center; flex: none; }
.bm > span, .other > span { margin-top: -1px; }
.more { width: 20.500px; font-size: 18px; line-height: 20px; padding-left: 2px; margin-top: -5px; }
.other { height: 16px; display: flex; align-items: center; gap: 8px; border-left: 1px solid #5f6368; padding-left: 9px; }

.viewport { height: 931px; flex: none; display: flex; overflow: hidden; background: #fff; }
main { width: 1903px; height: 931px; flex: none; overflow: hidden; }
.topnav { height: 91px; display: flex; align-items: flex-start; }
.brand { width: 688px; padding: 15px 0 0 25px; font: 900 20.500px/24px Inter, sans-serif; color: #111; }
.brand span { display: inline-block; }
nav { width: 881px; display: flex; padding-top: 20px; font: 17px/20px "Liberation Sans", Arial, sans-serif; color: #6c6c6c; }
nav a { display: flex; align-items: center; gap: 7.500px; flex: none; }
nav a > span { margin-top: 1px; }
.auth { display: flex; gap: 14px; padding-top: 9px; }
.auth button { height: 38px; border: 1px solid #212529; border-radius: 4px; display: flex; align-items: center; gap: 7px; padding: 0 0 2px 15px; font: 14px "Liberation Sans", Arial, sans-serif; background: #fff; color: #212529; }
.auth .login { width: 87px; }
.auth .signup { width: 86px; background: #212529; color: #fff; padding-left: 10px; }
.auth svg { width: 14px; height: 14px; }
.intro { height: 123px; padding: 9px 0 0 43.500px; border-bottom: 1px solid #c7c8c9; }
h1 { font: 300 27px/34px Inter, sans-serif; margin-left: -2px; }
h1 span { display: inline-block; }
.intro p { line-height: 22px; margin-top: 7px; }
.intro p + p { margin-top: 14px; }
.list { width: 1101px; margin: 72px 0 0 401px; display: flex; flex-direction: column; gap: 14.500px; }
.card { height: 261.500px; flex: none; display: flex; border-radius: 15px; box-shadow: 0 8px 16px rgba(0, 0, 0, .15); }
.in { height: 284px; }
.out { background: #ffbac5; color: #c1001f; --tone: #dc3545; }
.in { background: #46edba; color: #04382a; --tone: #198754; }
.mark { width: 193px; padding: 0 0 2px 59px; display: flex; align-items: center; }
.mark svg { width: 72px; height: 72px; }
.mark circle { fill: var(--tone); }
.mark path { fill: none; stroke: #ffbac5; stroke-width: 6.800; stroke-linecap: round; stroke-linejoin: round; }
.in .mark path { stroke: #46edba; }
.body { width: 717px; padding-top: 20px; }
.in .body { padding-top: 21px; }
h2 { font: 600 17.300px/24px Inter, sans-serif; }
h3 { font: 600 13.800px/20px Inter, sans-serif; margin: 12px 0 6px; }
.body p { line-height: 21.600px; }
.body .note { margin-top: 7.500px; }
.body .updated { display: flex; gap: 4.500px; margin-top: 14.400px; }
.view { width: 104px; height: 34px; margin-top: 14.500px; border: 1px solid var(--tone); border-radius: 4px; background: none; color: var(--tone); display: flex; align-items: center; padding-left: 10.500px; }
.amount { flex: 1; display: flex; align-items: center; justify-content: center; font: 600 17.300px/24px Inter, sans-serif; color: var(--tone); padding-bottom: 10px; }
.scroll { width: 17px; background: #f1f1f1; display: flex; flex-direction: column; align-items: center; }
.scroll svg { width: 17px; height: 17px; }
.thumb { width: 13px; height: 620px; background: #c1c1c1; margin-bottom: auto; }

.taskbar { height: 40px; flex: none; display: flex; align-items: center; background: #202020; color: #f1f1f1; font-size: 12px; }
.start { width: 48px; height: 40px; background: #1b2833; display: flex; align-items: center; justify-content: center; }
.start svg { width: 16px; height: 16px; }
.search { width: 288px; height: 40px; display: flex; align-items: center; background: #323232; border: 1px solid #5a5a5a; padding-left: 11px; font-size: 15px; color: #dcdcdc; }
.lens { width: 17px; height: 17px; margin-right: 11.500px; }
.art { width: 70px; height: 36px; margin-left: 44px; }
.taskview { width: 51px; display: flex; justify-content: center; padding-right: 3px; }
.taskview svg { width: 18px; height: 18px; }
.apps { display: flex; gap: 1px; }
.app { width: 48px; height: 40px; display: flex; align-items: center; justify-content: center; position: relative; }
.app svg { width: 24px; height: 24px; }
.open::after, .current::after { content: ""; position: absolute; left: 4px; right: 4px; bottom: 0; height: 2px; background: #b5b5b5; }
.current { background: #4b4b4b; }
.current::after { left: 0; right: 0; }
.badge { position: absolute; right: 3px; bottom: 4px; width: 17px; height: 17px; border: 1px solid #aaa; border-radius: 50%; background: #282828; font: 600 11px/15px "Open Sans", sans-serif; text-align: center; color: #fff; }
.weather { margin-left: 156px; width: 165px; display: flex; align-items: center; font-size: 13.500px; gap: 8px; }
.weather svg { width: 26px; height: 26px; }
.tray { display: flex; }
.tray span { width: 32px; display: flex; justify-content: center; }
.eng { margin-left: 5px; width: 36px; margin-top: -1px; }
.clock { width: 58px; display: flex; flex-direction: column; align-items: center; line-height: 18px; margin-top: -1px; }
.notif { position: relative; margin-left: 18px; width: 24px; height: 40px; padding-top: 12px; }
.notif svg { width: 17px; height: 17px; }
.notif .badge { right: 0; bottom: 4px; }
.peek { width: 1px; height: 40px; margin-left: 12px; background: #5a5a5a; }
</style>
